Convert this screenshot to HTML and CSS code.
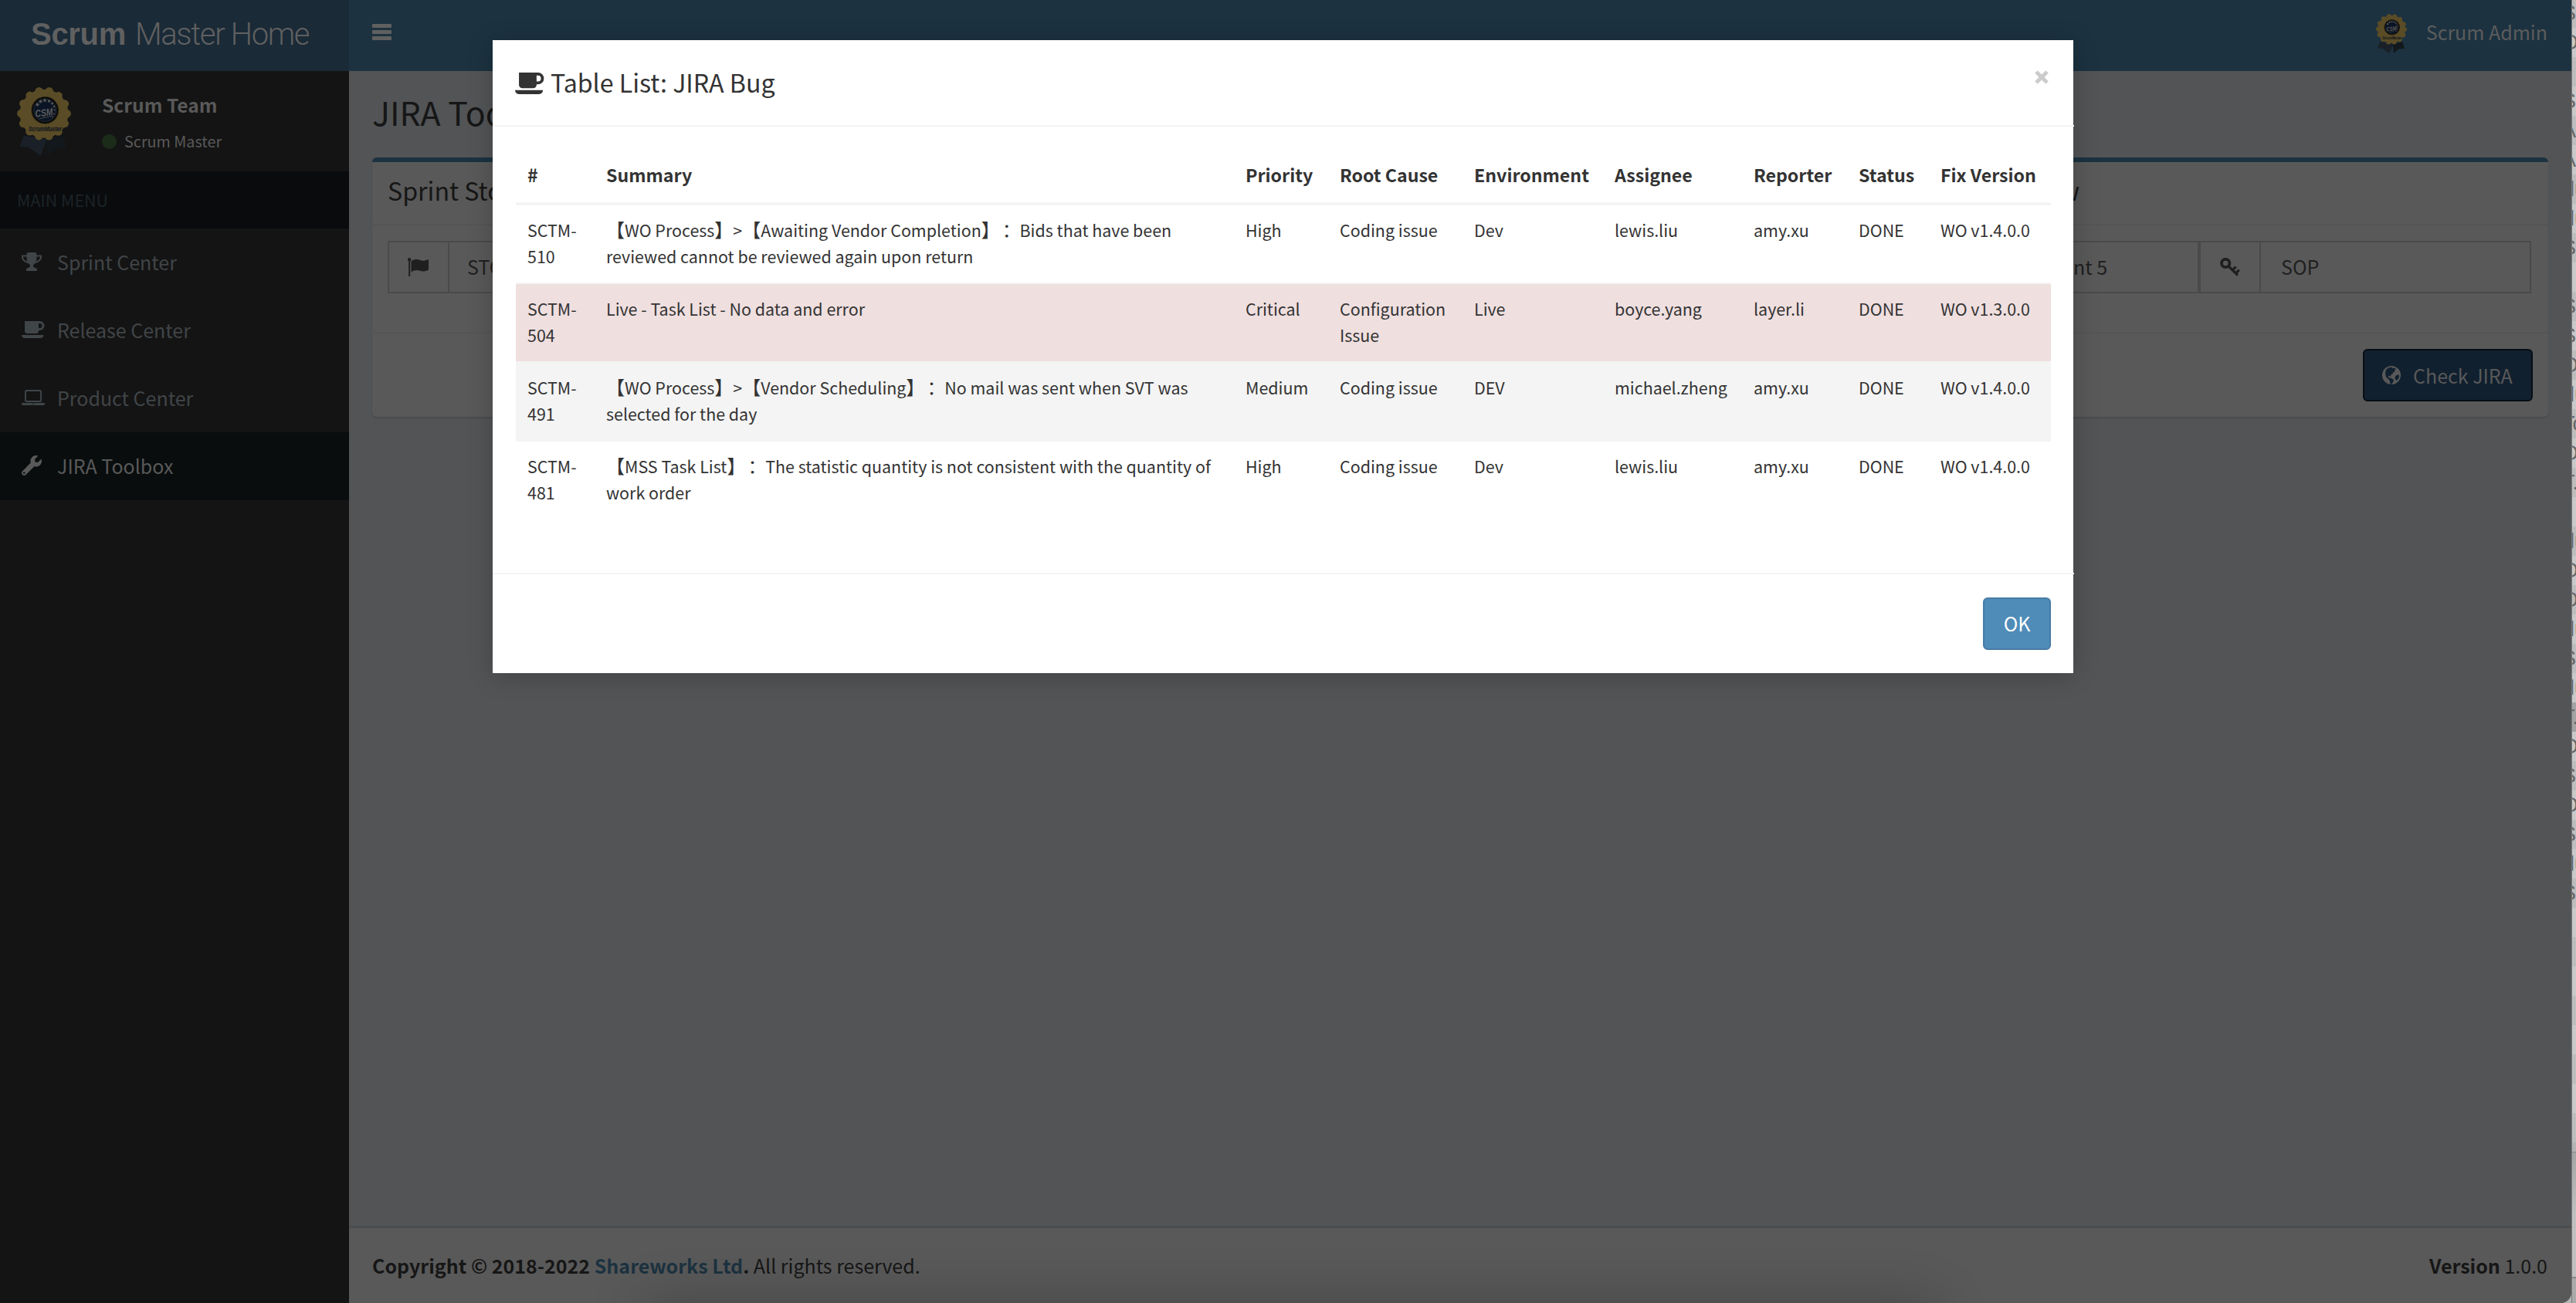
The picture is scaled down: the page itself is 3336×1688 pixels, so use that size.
FILE: index.html
```html
<!DOCTYPE html>
<html lang="en">
<head>
<meta charset="utf-8">
<title>Scrum Master Home</title>
<link rel="stylesheet" href="styles.css">
</head>
<body>
<svg class="defs" aria-hidden="true">
  <symbol id="coffee" viewBox="0 0 30 22"><path fill-rule="evenodd" d="M4 0H23.5a6 6 0 0 1 0 12H22v.5a3.500 3.500 0 0 1-3.500 3.500h-11A3.500 3.500 0 0 1 4 12.500zM22 3v6h1.500a3 3 0 0 0 0-6z"/><path d="M0 18h28.500c0 2-1.500 4-4 4H4c-2.500 0-4-2-4-4z"/></symbol>
  <symbol id="trophy" viewBox="0 0 26 24"><path d="M6.500 3.500V2.400Q6.500 0 9 0h8q2.500 0 2.500 2.400V3.500H26V6c0 4-4 7.500-8.600 8-1.300 1.500-2.500 2-2.500 3.800 0 1.500 1.600 1.700 3.100 2.300 1.400.5 2 1.200 2 2.700V24H6v-1.200c0-1.500.6-2.200 2-2.700 1.500-.6 3.100-.8 3.100-2.300 0-1.800-1.200-2.300-2.500-3.800C4 13.500 0 10 0 6V3.500zM2 5.500V6c0 2.400 2.200 4.700 5.300 5.700C6.600 9.800 6.500 8 6.500 5.500zM24 5.500h-4.500c0 2.500-.1 4.300-.8 6.200C21.800 10.700 24 8.400 24 6z" fill-rule="evenodd"/></symbol>
  <symbol id="laptop" viewBox="0 0 30 20"><path fill-rule="evenodd" d="M6.500 0h17A2.500 2.500 0 0 1 26 2.500v11a2.500 2.500 0 0 1-2.500 2.500h-17A2.500 2.500 0 0 1 4 13.500v-11A2.500 2.500 0 0 1 6.500 0zM6.500 2a.6.600 0 0 0-.6.600v10.800c0 .4.200.6.600.6h17c.4 0 .6-.2.600-.6V2.600a.6.600 0 0 0-.6-.6zM0 17h30v1.500c0 .9-1 1.500-2.200 1.500H2.200C1 20 0 19.400 0 18.500zM13.500 17.700v.800h3v-.8z"/></symbol>
  <symbol id="wrench" viewBox="0 0 512 512"><path d="M507.730 109.100c-2.240-9.030-13.540-12.090-20.120-5.510l-74.360 74.360-67.880-11.310-11.310-67.880 74.360-74.360c6.620-6.620 3.430-17.900-5.660-20.160-47.380-11.740-99.550.910-136.580 37.930-39.640 39.640-50.550 97.100-34.050 147.200L18.740 402.760c-24.990 24.990-24.990 65.510 0 90.500 24.990 24.990 65.510 24.990 90.500 0l213.210-213.210c50.120 16.710 107.470 5.680 147.370-34.220 37.070-37.070 49.700-89.320 37.910-136.730zM64 472c-13.250 0-24-10.750-24-24 0-13.260 10.750-24 24-24s24 10.740 24 24c0 13.250-10.750 24-24 24z"/></symbol>
  <symbol id="flag" viewBox="0 0 28 24"><circle cx="2.200" cy="2.200" r="2.200"/><path d="M1.200 3h2v21h-2zM4.500 4.200C10 .9 13.500 2 17 3.300c3.500 1.300 6-.1 10-1.300v13.600c-4.500 2.200-7.500 2.600-11 1.200-3.500-1.300-6.500-1.200-11.500 1.700z"/></symbol>
  <symbol id="key" viewBox="0 0 26 24"><circle cx="7.200" cy="7" r="5.200" fill="none" stroke="currentColor" stroke-width="3.800"/><path d="M11 11l12 11.500M16.500 15.500l4-3.800M20.800 19.500l4-3.800" fill="none" stroke="currentColor" stroke-width="3.200"/></symbol>
  <symbol id="globe" viewBox="0 0 24 24"><circle cx="12" cy="12" r="12"/><path class="land" d="M8 2.500l4-1 1.500 1.500 3-.5 1 2.500-2 .5 1.500 2-2.500.5-1.500 3-2 .5.500 2.500-2.500-1.500-1.500 1.500 2 1.500 2.500.5 3 2-.500 2.500-2.500 3-1.500.5-.5-4-2-3-3-2.500L4 9l1-4zM17 13l4.500-2 .5 4-3 4-2.500-2z"/></symbol>
  <symbol id="badge" viewBox="0 0 70 89">
    <path fill="#1a2027" d="M9 63L3.500 77.500 15.500 78.500 30.500 89.500 39 68z"/><path fill="#12181c" d="M38 68L39.700 89 51.500 79.500 64.500 78.500 60 63z"/>
    <circle cx="35" cy="34.700" r="31.500" fill="#5a4c26"/><circle cx="35" cy="34.700" r="29.700" fill="none" stroke="#5a4c26" stroke-width="10.500" stroke-linecap="round" stroke-dasharray="0 13.330"/>
    <circle cx="36.300" cy="30.300" r="17" fill="#08090b"/><circle cx="36.300" cy="30.300" r="17" fill="none" stroke="#08090b" stroke-width="1.800" stroke-dasharray="1.200 1.200"/>
    <circle cx="36.300" cy="30.300" r="14.800" fill="#0a1424" stroke="#3b3a30" stroke-width=".6"/>
    <g fill="#555"><circle cx="26.500" cy="23" r="2"/><circle cx="30.500" cy="19" r="2"/><circle cx="36" cy="17.500" r="1.900"/><circle cx="41.500" cy="18.500" r="1.700"/><circle cx="45.500" cy="21.500" r="1.500"/><circle cx="48" cy="25.500" r="1.300"/><circle cx="48.800" cy="30" r="1.100"/><circle cx="48" cy="35" r="1"/><circle cx="46" cy="39" r=".8"/></g>
    <text x="23.500" y="38" textLength="23" lengthAdjust="spacingAndGlyphs" class="csm" transform="rotate(-7 35 34)">CSM</text>
    <text x="15" y="57.500" textLength="43" lengthAdjust="spacingAndGlyphs" class="master">ScrumMaster</text>
    <path d="M29 41.500l17-4" stroke="#555" stroke-width=".8"/>
  </symbol>
</svg>

<div class="desktop">
  <div class="window">
    <aside class="sidebar">
      <div class="logo"><b>Scrum</b><span>Master Home</span></div>
      <div class="user">
        <svg class="avatar"><use href="#badge"/></svg>
        <div class="who">
          <div class="name">Scrum Team</div>
          <div class="role"><i class="dot"></i>Scrum Master</div>
        </div>
      </div>
      <div class="menu-head">MAIN MENU</div>
      <nav>
        <a class="item"><span class="ic"><svg width="26" height="24"><use href="#trophy"/></svg></span>Sprint Center</a>
        <a class="item"><span class="ic"><svg width="30" height="22"><use href="#coffee"/></svg></span>Release Center</a>
        <a class="item"><span class="ic"><svg width="30" height="20"><use href="#laptop"/></svg></span>Product Center</a>
        <a class="item active"><span class="ic"><svg width="26" height="26"><use href="#wrench"/></svg></span>JIRA Toolbox</a>
      </nav>
    </aside>
    <div class="main">
      <header class="navbar">
        <div class="burger"><i></i><i></i><i></i></div>
        <div class="account"><svg class="mini"><use href="#badge"/></svg>Scrum Admin</div>
      </header>
      <section class="content">
        <h1>JIRA Toolbox</h1>
        <div class="box">
          <div class="box-head"><span>Sprint Story</span><span>Overview</span></div>
          <div class="box-body">
            <div class="group grow"><span class="addon"><svg width="28" height="24"><use href="#flag"/></svg></span><span class="input">STORY</span></div>
            <div class="group sprint"><span class="addon"></span><span class="input">Sprint 5</span></div>
            <div class="group sop"><span class="addon"><svg width="26" height="24"><use href="#key"/></svg></span><span class="input">SOP</span></div>
          </div>
          <div class="box-foot"><div class="check"><svg width="24" height="24"><use href="#globe"/></svg>Check JIRA</div></div>
        </div>
      </section>
      <footer class="footer">
        <div><b>Copyright © 2018-2022 <span class="link">Shareworks Ltd</span>.</b> All rights reserved.</div>
        <div><b>Version</b> 1.0.0</div>
      </footer>
    </div>
  </div>
  <div class="behind">
    <p>S</p><p>O</p><p>/</p><p>S</p><p>A</p><p>A</p><p class="l">lu</p><p class="l">lu</p><p>S</p><p>/</p><p>S</p><p>S</p><p>O</p><p class="l">lu</p><p>To</p><p>O</p><p>T.</p><p>/</p><p class="l">lu</p><p>O</p><p>O</p><p class="l">lu</p><p>S</p><p class="l">lu</p><p class="sel">T.</p><p>O</p><p>S</p><p>O</p><p>S</p><p class="l">lu</p><p>S</p><p></p><p></p><p></p><p></p><p></p><p></p><p></p><p></p>
    <div class="pane"></div><div class="rest"></div>
  </div>
</div>
<div class="dock-shadow"></div>

<div class="modal">
  <div class="modal-head"><svg width="38" height="28"><use href="#coffee"/></svg><span>Table List: JIRA Bug</span><svg class="close" viewBox="0 0 20 18"><path d="M3 2l14 14M17 2L3 16" stroke="#ccc" stroke-width="5"/></svg></div>
  <div class="modal-body">
    <table>
      <colgroup><col class="c1"><col class="c2"><col class="c3"><col class="c4"><col class="c5"><col class="c6"><col class="c7"><col class="c8"><col></colgroup>
      <thead><tr><th>#</th><th>Summary</th><th>Priority</th><th>Root Cause</th><th>Environment</th><th>Assignee</th><th>Reporter</th><th>Status</th><th>Fix Version</th></tr></thead>
      <tbody>
        <tr><td>SCTM-<br>510</td><td><em>【</em>WO Process<em>】</em>&gt;<em>【</em>Awaiting Vendor Completion<em>】</em><em class="colon">：</em> Bids that have been<br>reviewed cannot be reviewed again upon return</td><td>High</td><td>Coding issue</td><td>Dev</td><td>lewis.liu</td><td>amy.xu</td><td>DONE</td><td>WO v1.4.0.0</td></tr>
        <tr class="danger"><td>SCTM-<br>504</td><td>Live - Task List - No data and error</td><td>Critical</td><td>Configuration<br>Issue</td><td>Live</td><td>boyce.yang</td><td>layer.li</td><td>DONE</td><td>WO v1.3.0.0</td></tr>
        <tr class="odd"><td>SCTM-<br>491</td><td><em>【</em>WO Process<em>】</em>&gt;<em>【</em>Vendor Scheduling<em>】</em><em class="colon">：</em> No mail was sent when SVT was<br>selected for the day</td><td>Medium</td><td>Coding issue</td><td>DEV</td><td>michael.zheng</td><td>amy.xu</td><td>DONE</td><td>WO v1.4.0.0</td></tr>
        <tr><td>SCTM-<br>481</td><td><em>【</em>MSS Task List<em>】</em><em class="colon">：</em> The statistic quantity is not consistent with the quantity of<br>work order</td><td>High</td><td>Coding issue</td><td>Dev</td><td>lewis.liu</td><td>amy.xu</td><td>DONE</td><td>WO v1.4.0.0</td></tr>
      </tbody>
    </table>
  </div>
  <div class="modal-foot"><div class="ok">OK</div></div>
</div>
</body>
</html>
```
FILE: styles.css
```css
* { box-sizing: border-box; }
body { margin: 0; width: 3336px; height: 1688px; overflow: hidden; position: relative; background: #b4b4b4; font: 25px "Noto Sans CJK SC", "Noto Sans", sans-serif; color: #161616; }
svg { display: block; fill: currentColor; flex: none; }
.defs { position: absolute; width: 0; height: 0; }
h1, p { margin: 0; font-weight: 400; }

.desktop { display: flex; height: 1688px; }
.window { width: 3330px; height: 1688px; display: flex; border-radius: 0 0 14px 0; overflow: hidden; }

.sidebar { width: 452px; background: #141414; flex: none; }
.logo { height: 92px; line-height: 89px; background: #1a2a37; color: #606060; padding-left: 40px; display: flex; gap: 12px; white-space: nowrap; }
.logo b { font: 700 40px/89px "Liberation Sans", sans-serif; letter-spacing: -.3px; }
.logo span { font: 300 40px/89px Roboto, sans-serif; letter-spacing: -1.350px; }
.user { height: 130px; display: flex; padding: 20px 0 0 22px; }
.avatar { width: 70px; height: 90px; }
.csm { font: italic 700 13px "Liberation Sans", sans-serif; fill: #5c5c5c; }
.master { font: italic 700 8.500px "Liberation Sans", sans-serif; fill: #0b1320; }
.who { padding: 3px 0 0 40px; }
.name { font-size: 24.600px; font-weight: 700; line-height: 40px; color: #595959; }
.role { font-size: 19.800px; line-height: 32px; margin-top: 12px; color: #595959; display: flex; align-items: center; gap: 10px; }
.dot { width: 19px; height: 19px; border-radius: 50%; background: #1b2c19; }
.menu-head { height: 74px; line-height: 74px; padding-left: 22px; background: #0a0b0d; color: #1b2327; font-size: 21.430px; }
.item { height: 88px; line-height: 86px; display: flex; align-items: center; padding: 0 0 2px 28px; color: #404548; }
.item .ic { width: 46px; }
.active { background: #090d0e; color: #595959; }

.main { flex: 1; display: flex; flex-direction: column; background: #525456; }
.navbar { height: 92px; background: #1c3240; padding: 0 31px 0 30px; display: flex; justify-content: space-between; color: #5c5c5c; }
.burger { width: 25px; padding-top: 31px; display: flex; flex-direction: column; gap: 3px; }
.burger i { height: 5px; background: #606060; border-radius: 1px; }
.account { display: flex; line-height: 83px; gap: 25px; }
.mini { width: 40px; height: 51px; margin-top: 18px; }
.content { flex: 1; padding: 22px 30px 0; }
h1 { font-size: 42.860px; line-height: 60px; margin-bottom: 30px; }
.box { border-top: 6px solid #1c3240; border-radius: 6px; background: #595959; box-shadow: 0 2px 2px rgba(0, 0, 0, .12); height: 336px; }
.box-head { height: 82px; border-bottom: 2px solid #555; padding: 0 607px 0 20px; display: flex; justify-content: space-between; font-size: 32.150px; line-height: 72px; }
.box-body { height: 138px; padding: 20px 22px 0 20px; display: flex; }
.group { display: flex; height: 68px; color: #1f1f1f; }
.grow { flex: 1; }
.sprint { width: 318px; }
.sop { width: 430px; }
.addon { width: 80px; border: 2px solid #4a4a4a; display: flex; align-items: center; justify-content: center; }
.input { flex: 1; border: 2px solid #4a4a4a; margin-left: -2px; padding-left: 26px; line-height: 62px; }
.grow .input { padding-left: 23px; }
.sprint .input { padding-left: 28px; }
.box-foot { border-top: 2px solid #555; padding: 20px; display: flex; justify-content: flex-end; }
.check { width: 220px; height: 68px; border: 2px solid #070d15; border-radius: 6px; background: #11202f; color: #595959; display: flex; align-items: center; padding-left: 23px; gap: 16px; line-height: 62px; white-space: nowrap; }
.land { fill: #11202f; }
.footer { height: 100px; border-top: 3px solid #4a4c4e; background: #595959; padding: 0 31px 0 30px; display: flex; justify-content: space-between; line-height: 96px; }
.link { color: #1c3240; }

.behind { width: 6px; overflow: hidden; background: #b4b4b4; border-left: 1px solid #77797b; color: #666; }
.behind p { height: 38px; background: #c9c9c9; font: 27px/38px "Liberation Sans", sans-serif; text-indent: -13px; white-space: nowrap; overflow: hidden; }
.behind p:nth-child(odd) { background: #bdbdbd; }
.behind p:first-child { height: 36px; line-height: 34px; }
.behind p.l { text-indent: -3px; }
.behind p.sel { background: #a3a3a3; }
.pane { height: 164px; margin-top: 12px; border-top: 1px solid #888; border-bottom: 2px solid #888; background: linear-gradient(#a4a4a4, #c0c0c0 50%); }
.behind .rest { height: 44px; background: #aaa; }
.dock-shadow { position: absolute; left: 840px; top: 1700px; width: 1660px; height: 40px; border-radius: 20px; box-shadow: 0 0 70px 14px rgba(0, 0, 0, .22); }

.modal { position: absolute; left: 638px; top: 52px; width: 2047px; height: 820px; background: #fff; color: #333; box-shadow: 0 4px 30px rgba(0, 0, 0, .22); }
.modal-head { height: 112px; width: 2048px; border-bottom: 2px solid #f4f4f4; padding: 0 32px 0 29px; display: flex; font-size: 32.150px; line-height: 108px; }
.modal-head svg { margin-top: 42px; }
.modal-head span { flex: 1; margin-left: 8px; }
.modal-head .close { width: 20px; height: 18px; margin-top: 39px; }
.modal-body { height: 578px; padding: 30px 29px 0 30px; }
table { width: 1988px; table-layout: fixed; border-collapse: separate; border-spacing: 0; font-size: 21.430px; line-height: 34px; }
.c1 { width: 101px; } .c2 { width: 828px; } .c3 { width: 122px; } .c4 { width: 174px; } .c5 { width: 182px; } .c6 { width: 180px; } .c7 { width: 136px; } .c8 { width: 106px; }
th { height: 72px; text-align: left; font-size: 23.150px; padding: 0 0 0 16px; border-bottom: 4px solid #f4f4f4; vertical-align: top; line-height: 64px; white-space: nowrap; }
td { height: 102px; padding: 15px 0 0 16px; vertical-align: top; border-top: 2px solid #f4f4f4; white-space: nowrap; }
th:first-child, td:first-child { padding-left: 15px; }
tbody tr:first-child td { height: 100px; border-top: 0; }
.danger td { background: #efdfdf; background-clip: padding-box; }
.odd td { background: #f4f4f4; }
em { font-style: normal; font-size: 24px; line-height: 0; text-spacing-trim: space-all; }
.colon { display: inline-block; width: 21px; text-indent: 3px; }
.modal-foot { width: 2048px; height: 130px; border-top: 2px solid #f4f4f4; padding: 30px; display: flex; justify-content: flex-end; }
.ok { width: 88px; height: 68px; border: 2px solid #477ba5; border-radius: 6px; background: #4f8cb8; color: #fff; text-align: center; line-height: 62px; }
```
